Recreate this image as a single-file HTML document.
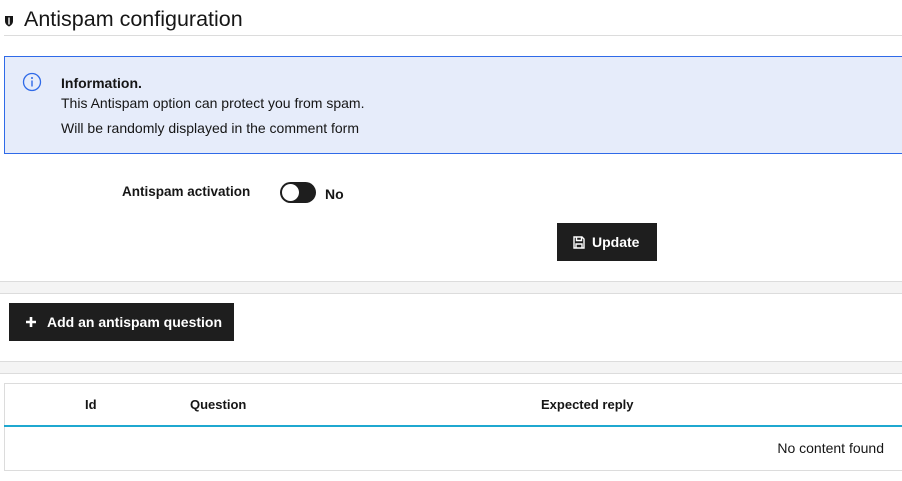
<!DOCTYPE html>
<html><head><style>
body{margin:0;width:902px;height:481px;overflow:hidden;background:#fff;font-family:"Liberation Sans",sans-serif;color:#161616;position:relative}
.a{position:absolute}
.btn{background:#1e1e1e;color:#fff;font-weight:bold;font-size:14px;display:flex;align-items:center;box-sizing:border-box}
</style></head><body>
<svg class="a" style="left:4px;top:15px" width="10" height="12" viewBox="0 0 10 12"><path d="M1 1h8v5c0 3-2 4.5-4 5.5C3 10.5 1 9 1 6z" fill="#161616"/><path d="M5 2.5v7" stroke="#fff" stroke-width="1.4"/></svg>
<div class="a" style="left:24px;top:7px;font-size:21.5px;color:#161616">Antispam configuration</div>
<div class="a" style="left:4px;top:35px;width:898px;height:1px;background:#dcdcdc"></div>
<div class="a" style="left:4px;top:56px;width:900px;height:98px;box-sizing:border-box;background:#e6ecfa;border:1px solid #2f6ae8"></div>
<svg class="a" style="left:22px;top:72px" width="20" height="20" viewBox="0 0 20 20"><circle cx="10" cy="10" r="8.5" fill="none" stroke="#2f6ae8" stroke-width="1.3"/><circle cx="10" cy="6" r="1" fill="#2f6ae8"/><path d="M10 8.5v6" stroke="#2f6ae8" stroke-width="1.4"/></svg>
<div class="a" style="left:61px;top:75px;font-size:14px;font-weight:bold">Information.</div>
<div class="a" style="left:61px;top:95px;font-size:14px">This Antispam option can protect you from spam.</div>
<div class="a" style="left:61px;top:120px;font-size:14px">Will be randomly displayed in the comment form</div>
<div class="a" style="left:122px;top:184px;font-size:13.5px;font-weight:bold">Antispam activation</div>
<div class="a" style="left:280px;top:182px;width:36px;height:21px;border-radius:11px;background:#1e1e1e"></div>
<div class="a" style="left:282px;top:184px;width:17px;height:17px;border-radius:50%;background:#fff"></div>
<div class="a" style="left:325px;top:186px;font-size:14px;font-weight:bold">No</div>
<div class="a btn" style="left:557px;top:223px;width:100px;height:38px;padding-left:16px">
<svg width="12" height="13" viewBox="0 0 12 13" style="margin-right:7px"><path d="M1 1h8l2 2v9H1z M3.5 1v3.5h5V1 M3 12V8h6v4" fill="none" stroke="#fff" stroke-width="1.4"/></svg>Update</div>
<div class="a" style="left:0;top:281px;width:902px;height:11px;background:#f4f4f4;border-top:1px solid #dcdcdc;border-bottom:1px solid #dcdcdc"></div>
<div class="a btn" style="left:9px;top:303px;width:225px;height:38px;padding-left:16px">
<svg width="12" height="12" viewBox="0 0 12 12" style="margin-right:10px"><path d="M6 1v10M1 6h10" stroke="#fff" stroke-width="2.6"/></svg>Add an antispam question</div>
<div class="a" style="left:0;top:361px;width:902px;height:11px;background:#f4f4f4;border-top:1px solid #dcdcdc;border-bottom:1px solid #dcdcdc"></div>
<div class="a" style="left:4px;top:383px;width:900px;height:88px;box-sizing:border-box;border:1px solid #dcdcdc"></div>
<div class="a" style="left:4px;top:425px;width:898px;height:2px;background:#1fa8d0"></div>
<div class="a" style="left:85px;top:397px;font-size:13px;font-weight:bold">Id</div>
<div class="a" style="left:190px;top:397px;font-size:13px;font-weight:bold">Question</div>
<div class="a" style="left:541px;top:397px;font-size:13px;font-weight:bold">Expected reply</div>
<div class="a" style="right:18px;top:440px;font-size:14px">No content found</div>
</body></html>
